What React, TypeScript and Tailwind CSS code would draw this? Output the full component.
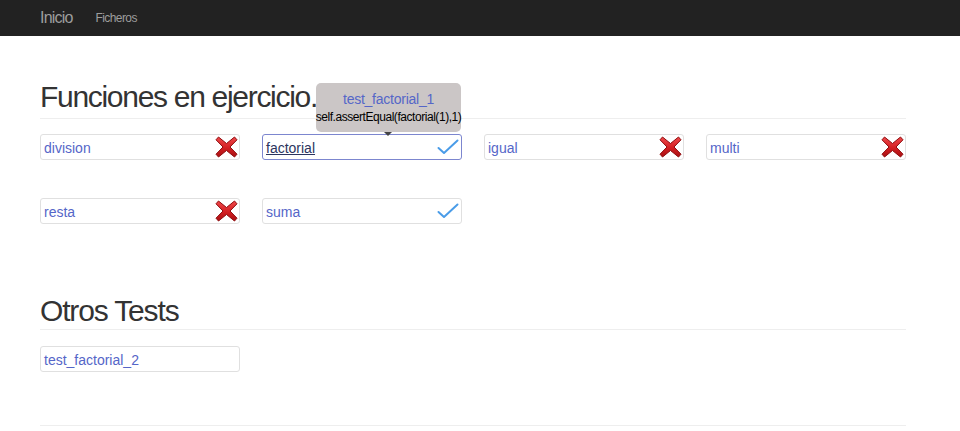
import React from 'react'

type Fn = { name: string; ok: boolean; active?: boolean }

const funciones: Fn[] = [
  { name: 'division', ok: false },
  { name: 'factorial', ok: true, active: true },
  { name: 'igual', ok: false },
  { name: 'multi', ok: false },
  { name: 'resta', ok: false },
  { name: 'suma', ok: true },
]

function CrossIcon() {
  return (
    <svg width="23" height="22" viewBox="0 0 23 22" className="shrink-0">
      <defs>
        <linearGradient id="xg" x1="0" y1="0" x2="0" y2="1">
          <stop offset="0" stopColor="#f0494b" />
          <stop offset="0.55" stopColor="#d31f22" />
          <stop offset="1" stopColor="#a80f12" />
        </linearGradient>
      </defs>
      <path
        d="M3.5 1 L11.5 7.5 L19.5 1 L22 3.8 L15 11 L22 18.2 L19.5 21 L11.5 14.5 L3.5 21 L1 18.2 L8 11 L1 3.8 Z"
        fill="url(#xg)"
        stroke="#8e0c0e"
        strokeWidth="1"
        strokeLinejoin="round"
      />
    </svg>
  )
}

function CheckIcon() {
  return (
    <svg width="22" height="16" viewBox="0 0 22 16" className="mr-[1px] shrink-0">
      <path
        d="M1.5 9 L7 14 L20.5 1.5"
        fill="none"
        stroke="#4a9ce8"
        strokeWidth="2"
        strokeLinecap="round"
        strokeLinejoin="round"
      />
    </svg>
  )
}

function Card({ fn }: { fn: Fn }) {
  return (
    <div
      className={`relative flex h-[26px] items-center justify-between rounded-[3px] border bg-white pl-[3px] pr-[1px] ${
        fn.active ? 'border-[#7c86cf]' : 'border-[#e0e0e0]'
      }`}
    >
      <span
        className={`pt-[2px] text-[14px] leading-none ${
          fn.active ? 'text-[#2c355e] underline' : 'text-[#5566c8]'
        }`}
      >
        {fn.name}
      </span>
      {fn.ok ? <CheckIcon /> : <CrossIcon />}
      {fn.active && (
        <div className="absolute bottom-[27px] left-[53px] z-10 flex h-[49px] w-[145px] flex-col items-center rounded-[5px] bg-[#cbc6c6] pt-[8px]">
          <span className="text-[14px] leading-[16px] tracking-[-0.25px] text-[#5566c8]">test_factorial_1</span>
          <span className="mt-[3px] text-[12px] leading-[14px] tracking-[-0.45px] text-black">
            self.assertEqual(factorial(1),1)
          </span>
          <span className="absolute -bottom-[4px] left-[68px] h-0 w-0 border-x-[4px] border-t-[4px] border-x-transparent border-t-[#444]" />
        </div>
      )}
    </div>
  )
}

export default function App() {
  return (
    <div className="min-h-[431px] bg-white" style={{ fontFamily: '"Liberation Sans", Arial, sans-serif' }}>
      <nav className="flex h-[36px] items-center bg-[#222222] px-[40px]">
        <span className="text-[16px] tracking-[-0.8px] text-[#9d9d9d]">Inicio</span>
        <span className="ml-[23px] text-[12px] tracking-[-0.6px] text-[#9d9d9d]">Ficheros</span>
      </nav>
      <main className="mx-[40px] w-[866px]">
        <h1 className="mt-[44px] border-b border-[#eeeeee] pb-[5px] text-[30px] leading-[33px] tracking-[-1.3px] text-[#333333]">
          Funciones en ejercicio.
        </h1>
        <div className="mt-[15px] grid grid-cols-4 gap-x-[22px] gap-y-[38px]">
          {funciones.map((fn) => (
            <Card key={fn.name} fn={fn} />
          ))}
        </div>
        <h1 className="mt-[70px] border-b border-[#eeeeee] pb-[2px] text-[30px] leading-[33px] tracking-[-1.15px] text-[#333333]">
          Otros Tests
        </h1>
        <div className="mt-[16px] grid grid-cols-4 gap-x-[22px]">
          <div className="flex h-[26px] items-center rounded-[3px] border border-[#e0e0e0] pl-[3px]">
            <span className="pt-[2px] text-[14px] leading-none text-[#5566c8]">test_factorial_2</span>
          </div>
        </div>
        <hr className="mt-[53px] border-t border-[#eeeeee]" />
      </main>
    </div>
  )
}
